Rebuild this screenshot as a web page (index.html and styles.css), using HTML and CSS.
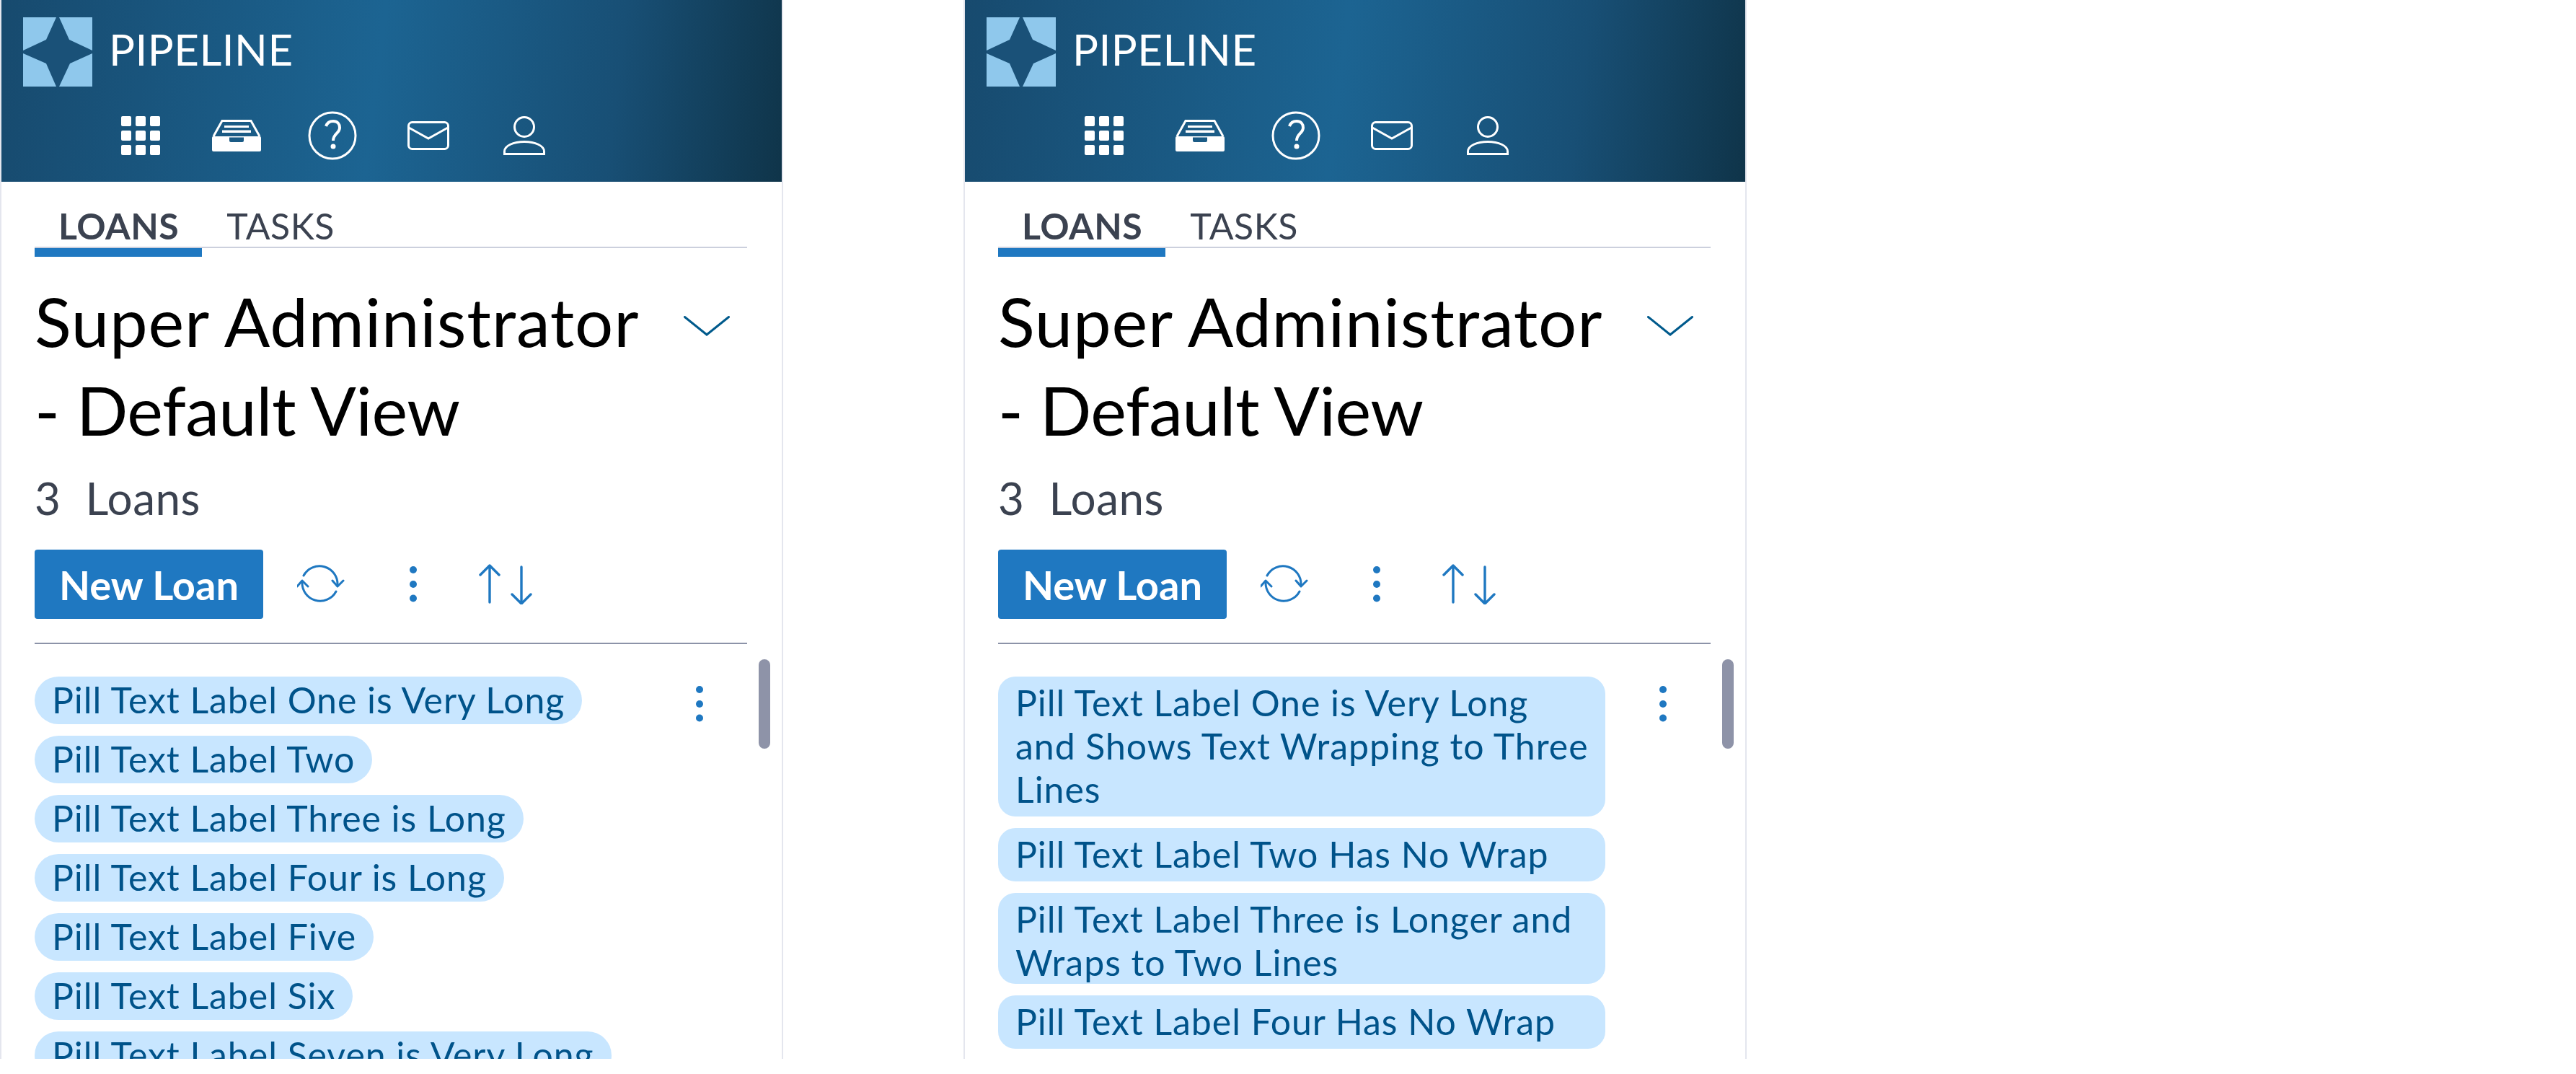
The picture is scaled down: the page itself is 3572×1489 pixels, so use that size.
FILE: index.html
```html
<!DOCTYPE html>
<html lang="en">
<head>
    <meta charset="UTF-8">
    <title>Pipeline</title>
    <link rel="stylesheet" href="styles.css">
</head>
<body>
    <svg class="icon-defs" aria-hidden="true">
        <symbol id="i-logo" viewBox="0 0 96 96">
            <rect width="96" height="96" fill="#8fc8ec"/>
            <path d="M46 0 L50 0 L64 31 L96 46 L96 50 L65 64 L50 96 L46 96 L32 64 L0 50 L0 46 L32 31 Z" fill="#1a5178"/>
        </symbol>
        <symbol id="i-grid" viewBox="0 0 54 54">
            <rect x="0" y="0" width="14" height="14" rx="2" fill="currentColor"/>
            <rect x="20" y="0" width="14" height="14" rx="2" fill="currentColor"/>
            <rect x="40" y="0" width="14" height="14" rx="2" fill="currentColor"/>
            <rect x="0" y="20" width="14" height="14" rx="2" fill="currentColor"/>
            <rect x="20" y="20" width="14" height="14" rx="2" fill="currentColor"/>
            <rect x="40" y="20" width="14" height="14" rx="2" fill="currentColor"/>
            <rect x="0" y="40" width="14" height="14" rx="2" fill="currentColor"/>
            <rect x="20" y="40" width="14" height="14" rx="2" fill="currentColor"/>
            <rect x="40" y="40" width="14" height="14" rx="2" fill="currentColor"/>
        </symbol>
        <symbol id="i-drawer" viewBox="0 0 68 44">
            <path d="M2 23 L14 1.5 L54 1.5 L66 23" fill="none" stroke="currentColor" stroke-width="3"/>
            <path d="M17 8 H51 V11 H17 Z M14 14.5 H54 V18 H14 Z" fill="currentColor"/>
            <path fill-rule="evenodd" d="M2 23 H66 Q68 23 68 25 V42 Q68 44 66 44 H2 Q0 44 0 42 V25 Q0 23 2 23 Z M24 24.5 V29 Q24 31 26 31 H42 Q44 31 44 29 V24.5 Z" fill="currentColor"/>
        </symbol>
        <symbol id="i-help" viewBox="0 0 68 68">
            <circle cx="34" cy="34" r="32" fill="none" stroke="currentColor" stroke-width="3"/>
            <path d="M25 21 C27 15 31 14 35 14 C41 14 44 18 44 23 C44 31 35 31 35 41" fill="none" stroke="currentColor" stroke-width="4"/>
            <circle cx="35" cy="49" r="3.5" fill="currentColor"/>
        </symbol>
        <symbol id="i-mail" viewBox="0 0 58 40">
            <rect x="1.5" y="1.5" width="55" height="37" rx="5" fill="none" stroke="currentColor" stroke-width="3"/>
            <path d="M2 9 L29 24 L56 9" fill="none" stroke="currentColor" stroke-width="3"/>
        </symbol>
        <symbol id="i-user" viewBox="0 0 58 54">
            <circle cx="29" cy="15" r="13.5" fill="none" stroke="currentColor" stroke-width="3"/>
            <path d="M1.5 52.5 H56.5 V49 C56.5 41 44 35.5 29 35.5 C14 35.5 1.5 41 1.5 49 Z" fill="none" stroke="currentColor" stroke-width="3"/>
        </symbol>
        <symbol id="i-chevron" viewBox="0 0 64 28">
            <path d="M1.5 1.5 L32 26 L62.5 1.5" fill="none" stroke="currentColor" stroke-width="3" stroke-linecap="round"/>
        </symbol>
        <symbol id="i-refresh" viewBox="0 0 66 54">
            <path d="M9 15 A25 25 0 0 1 56 28 M7 24 A25 25 0 0 0 54 37" fill="none" stroke="currentColor" stroke-width="3" stroke-linecap="round"/>
            <path d="M49 22 L56 30 L64 22 M0 30 L7 22 L15 30" fill="none" stroke="currentColor" stroke-width="3" stroke-linecap="round" stroke-linejoin="round"/>
        </symbol>
        <symbol id="i-more" viewBox="0 0 10 50">
            <circle cx="5" cy="5" r="5" fill="currentColor"/>
            <circle cx="5" cy="25" r="5" fill="currentColor"/>
            <circle cx="5" cy="44.5" r="5" fill="currentColor"/>
        </symbol>
        <symbol id="i-sort" viewBox="0 0 74 56">
            <path d="M15 53 V2 M2 15 L15 2 L28 15 M59 4 V55 M46 42 L59 55 L72 42" fill="none" stroke="currentColor" stroke-width="3.4" stroke-linecap="round" stroke-linejoin="round"/>
        </symbol>
    </svg>

    <div class="screens">
        <section class="panel">
            <header class="top-bar">
                <div class="brand">
                    <svg class="logo"><use href="#i-logo"/></svg>
                    <span class="brand-name">PIPELINE</span>
                </div>
                <nav class="top-nav">
                    <span class="nav-item"><svg class="ic-grid"><use href="#i-grid"/></svg></span>
                    <span class="nav-item"><svg class="ic-drawer"><use href="#i-drawer"/></svg></span>
                    <span class="nav-item"><svg class="ic-help"><use href="#i-help"/></svg></span>
                    <span class="nav-item"><svg class="ic-mail"><use href="#i-mail"/></svg></span>
                    <span class="nav-item"><svg class="ic-user"><use href="#i-user"/></svg></span>
                </nav>
            </header>
            <div class="content">
                <div class="tabs">
                    <span class="tab active">LOANS</span>
                    <span class="tab">TASKS</span>
                </div>
                <div class="tab-marker"></div>
                <div class="title-row">
                    <h1 class="title">Super Administrator<br><span class="title-sub">- Default View</span></h1>
                    <svg class="ic-chevron"><use href="#i-chevron"/></svg>
                </div>
                <div class="count"><span>3</span><span>Loans</span></div>
                <div class="toolbar">
                    <button class="new-loan">New Loan</button>
                    <span class="tool"><svg class="ic-refresh"><use href="#i-refresh"/></svg></span>
                    <span class="tool"><svg class="ic-more"><use href="#i-more"/></svg></span>
                    <span class="tool"><svg class="ic-sort"><use href="#i-sort"/></svg></span>
                </div>
                <div class="list">
                    <div class="pills">
                        <span class="pill">Pill Text Label One is Very Long</span>
                        <span class="pill">Pill Text Label Two</span>
                        <span class="pill">Pill Text Label Three is Long</span>
                        <span class="pill">Pill Text Label Four is Long</span>
                        <span class="pill">Pill Text Label Five</span>
                        <span class="pill">Pill Text Label Six</span>
                        <span class="pill">Pill Text Label Seven is Very Long</span>
                    </div>
                    <svg class="ic-more row-more"><use href="#i-more"/></svg>
                    <div class="scroll-thumb"></div>
                </div>
            </div>
        </section>

        <section class="panel">
            <header class="top-bar">
                <div class="brand">
                    <svg class="logo"><use href="#i-logo"/></svg>
                    <span class="brand-name">PIPELINE</span>
                </div>
                <nav class="top-nav">
                    <span class="nav-item"><svg class="ic-grid"><use href="#i-grid"/></svg></span>
                    <span class="nav-item"><svg class="ic-drawer"><use href="#i-drawer"/></svg></span>
                    <span class="nav-item"><svg class="ic-help"><use href="#i-help"/></svg></span>
                    <span class="nav-item"><svg class="ic-mail"><use href="#i-mail"/></svg></span>
                    <span class="nav-item"><svg class="ic-user"><use href="#i-user"/></svg></span>
                </nav>
            </header>
            <div class="content">
                <div class="tabs">
                    <span class="tab active">LOANS</span>
                    <span class="tab">TASKS</span>
                </div>
                <div class="tab-marker"></div>
                <div class="title-row">
                    <h1 class="title">Super Administrator<br><span class="title-sub">- Default View</span></h1>
                    <svg class="ic-chevron"><use href="#i-chevron"/></svg>
                </div>
                <div class="count"><span>3</span><span>Loans</span></div>
                <div class="toolbar">
                    <button class="new-loan">New Loan</button>
                    <span class="tool"><svg class="ic-refresh"><use href="#i-refresh"/></svg></span>
                    <span class="tool"><svg class="ic-more"><use href="#i-more"/></svg></span>
                    <span class="tool"><svg class="ic-sort"><use href="#i-sort"/></svg></span>
                </div>
                <div class="list">
                    <div class="pills wrapped">
                        <span class="pill">Pill Text Label One is Very Long and Shows Text Wrapping to Three Lines</span>
                        <span class="pill">Pill Text Label Two Has No Wrap</span>
                        <span class="pill tight">Pill Text Label Three is Longer and Wraps to Two Lines</span>
                        <span class="pill">Pill Text Label Four Has No Wrap</span>
                    </div>
                    <svg class="ic-more row-more"><use href="#i-more"/></svg>
                    <div class="scroll-thumb"></div>
                </div>
            </div>
        </section>
    </div>
</body>
</html>
```

FILE: styles.css
```css
body {
    margin: 0;
    background: #fff;
    font-family: Lato, "Open Sans", sans-serif;
}
.icon-defs {
    display: none;
}
.screens {
    display: flex;
    gap: 250px;
}
.panel {
    width: 1086px;
    height: 1468px;
    box-sizing: border-box;
    border: solid #e4e6ee;
    border-width: 0 2px;
    overflow: hidden;
}
.top-bar {
    height: 252px;
    margin: 0 -2px;
    background: linear-gradient(97deg, #174a6e 0%, #1c6492 48%, #184f75 78%, #0f3449 100%);
    color: #fff;
}
.brand {
    display: flex;
    align-items: flex-start;
    padding: 24px 0 0 32px;
    gap: 23px;
}
.logo {
    width: 96px;
    height: 96px;
}
.brand-name {
    font-size: 60px;
    font-weight: 400;
    line-height: 88px;
    letter-spacing: 0.5px;
}
.top-nav {
    display: flex;
    align-items: center;
    height: 70px;
    margin-top: 33px;
    padding-left: 128px;
}
.nav-item {
    width: 133px;
    display: flex;
    justify-content: center;
}
.ic-grid { width: 54px; height: 54px; }
.ic-drawer { width: 68px; height: 44px; }
.ic-help { width: 68px; height: 68px; }
.ic-mail { width: 58px; height: 40px; }
.ic-user { width: 58px; height: 54px; }
.ic-chevron { width: 64px; height: 28px; color: #005a8c; }
.ic-refresh { width: 66px; height: 54px; }
.ic-more { width: 10px; height: 50px; }
.ic-sort { width: 74px; height: 56px; }

.content {
    padding: 0 48px 0 46px;
}
.tabs {
    display: flex;
    gap: 66px;
    height: 92px;
    box-sizing: border-box;
    padding: 33px 0 0 33px;
    border-bottom: 2px solid #ccd0dd;
    color: #3b4250;
    font-size: 50px;
    line-height: 56px;
    letter-spacing: 0.5px;
}
.tab.active {
    font-weight: 700;
}
.tab-marker {
    width: 232px;
    height: 12px;
    background: #1f78c1;
}
.title-row {
    display: flex;
    justify-content: space-between;
    padding: 27px 24px 0 0;
}
.title {
    margin: 0;
    font-size: 94px;
    font-weight: 400;
    line-height: 123px;
    letter-spacing: 0.8px;
    color: #000;
}
.title-sub {
    letter-spacing: -0.5px;
}
.ic-chevron {
    margin-top: 55px;
}
.count {
    display: flex;
    gap: 34px;
    margin-top: 25px;
    font-size: 62px;
    line-height: 72px;
    letter-spacing: 0.5px;
    color: #3b4250;
}
.toolbar {
    display: flex;
    align-items: center;
    margin-top: 36px;
    padding-bottom: 33px;
    border-bottom: 2px solid #8c93a8;
}
.new-loan {
    width: 317px;
    height: 96px;
    border: none;
    border-radius: 4px;
    background: #1f78c1;
    color: #fff;
    font-family: inherit;
    font-size: 56px;
    font-weight: 700;
}
.tool {
    width: 128px;
    display: flex;
    justify-content: center;
    color: #1f78c1;
}
.tool:first-of-type {
    margin-left: 16px;
}
.list {
    position: relative;
    display: flex;
    padding-top: 45px;
}
.pills {
    display: flex;
    flex-direction: column;
    align-items: flex-start;
    gap: 16px;
}
.pill {
    box-sizing: border-box;
    height: 66px;
    padding: 0 24px;
    border-radius: 33px;
    background: #c8e6ff;
    color: #00538a;
    font-size: 50px;
    line-height: 64px;
    letter-spacing: 0.95px;
    white-space: nowrap;
}
.pills.wrapped {
    width: 842px;
    flex: none;
}
.wrapped .pill {
    width: 100%;
    height: auto;
    padding: 6px 15px 8px 24px;
    border-radius: 24px;
    line-height: 60px;
    white-space: normal;
}
.wrapped .pill.tight {
    padding-bottom: 0;
}
.row-more {
    position: absolute;
    left: 917px;
    top: 58px;
    color: #1f78c1;
}
.scroll-thumb {
    position: absolute;
    left: 1004px;
    top: 21px;
    width: 16px;
    height: 124px;
    border-radius: 8px;
    background: #8e93a8;
}
```
